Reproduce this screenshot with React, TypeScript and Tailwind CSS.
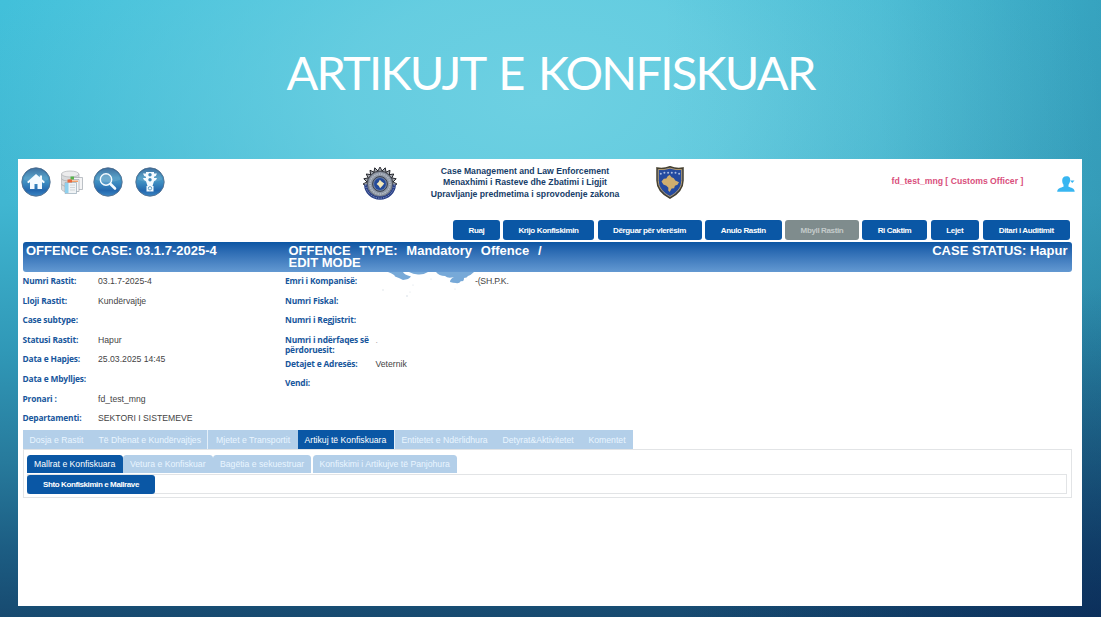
import type { ReactNode } from "react";

const actions = [
  { label: "Ruaj", cls: "ml-0 w-[47px] bg-[#0a57a5] text-white" },
  { label: "Krijo Konfiskimin", cls: "ml-[3px] w-[91px] bg-[#0a57a5] text-white" },
  { label: "Dërguar për vlerësim", cls: "ml-[3.5px] w-[104px] bg-[#0a57a5] text-white" },
  { label: "Anulo Rastin", cls: "ml-[3.5px] w-[76.5px] bg-[#0a57a5] text-white" },
  { label: "Mbyll Rastin", cls: "ml-[3.5px] w-[74px] bg-[#7f8c8d] text-[#c3caca]" },
  { label: "Ri Caktim", cls: "ml-[3px] w-[65px] bg-[#0a57a5] text-white" },
  { label: "Lejet", cls: "ml-[3.5px] w-[48.5px] bg-[#0a57a5] text-white" },
  { label: "Ditari i Auditimit", cls: "ml-[3.5px] w-[87.5px] bg-[#0a57a5] text-white" },
];

const leftFields = [
  ["Numri Rastit:", "03.1.7-2025-4"],
  ["Lloji Rastit:", "Kundërvajtje"],
  ["Case subtype:", ""],
  ["Statusi Rastit:", "Hapur"],
  ["Data e Hapjes:", "25.03.2025 14:45"],
  ["Data e Mbylljes:", ""],
  ["Pronari :", "fd_test_mng"],
  ["Departamenti:", "SEKTORI I SISTEMEVE"],
];

const tabs = [
  { label: "Dosja e Rastit", cls: "w-[69px] bg-[#b3cfe9] text-[#e9f5ff]" },
  { label: "Të Dhënat e Kundërvajtjes", cls: "w-[116.5px] border-r border-[#e4eff9] bg-[#b3cfe9] text-[#e9f5ff]" },
  { label: "Mjetet e Transportit", cls: "w-[89.5px] bg-[#b3cfe9] pl-[8px] text-[#e9f5ff]" },
  { label: "Artikuj të Konfiskuara", cls: "w-[96px] bg-[#0a57a5] text-white" },
  { label: "Entitetet e Ndërlidhura", cls: "w-[102px] border-l border-[#e4eff9] bg-[#b3cfe9] text-[#e9f5ff]" },
  { label: "Detyrat&Aktivitetet", cls: "w-[86px] bg-[#b3cfe9] text-[#e9f5ff]" },
  { label: "Komentet", cls: "w-[51px] bg-[#b3cfe9] text-[#e9f5ff]" },
];

const subTabs = [
  { label: "Mallrat e Konfiskuara", cls: "w-[96px] bg-[#0a57a5] text-white" },
  { label: "Vetura e Konfiskuar", cls: "w-[90px] bg-[#b3cfe9] text-[#e9f5ff]" },
  { label: "Bagëtia e sekuestruar", cls: "w-[98px] bg-[#b3cfe9] text-[#e9f5ff]" },
  { label: "Konfiskimi i Artikujve të Panjohura", cls: "ml-[1.5px] w-[144.5px] bg-[#b3cfe9] text-[#e9f5ff]" },
];

function Orb({ id, children }: { id: string; children: ReactNode }) {
  return (
    <svg viewBox="0 0 30 30" className="size-[30px] shrink-0">
      <defs>
        <linearGradient id={id} x1="0" y1="0" x2="0" y2="1">
          <stop offset="0" stopColor="#235c92" />
          <stop offset="0.35" stopColor="#4293c0" />
          <stop offset="0.5" stopColor="#3f8fc2" />
          <stop offset="0.8" stopColor="#2468ae" />
          <stop offset="1" stopColor="#3b86c4" />
        </linearGradient>
      </defs>
      <circle cx="15" cy="15" r="14.2" fill={`url(#${id})`} stroke="#55708f" strokeWidth="0.9" />
      <path d="M3 13a12 11.5 0 0 1 24 0q-12 4-24 0z" fill="#fff" opacity="0.12" />
      {children}
    </svg>
  );
}

function DatabaseIcon() {
  return (
    <svg viewBox="0 0 24 24" className="size-6 shrink-0">
      <path d="M1.500 4v15c0 2 3.500 3 8.500 3s9-1 9-3V4z" fill="#d9dbdd" stroke="#b0b3b6" strokeWidth="0.7" />
      <path d="M1.500 8.500c0 3.500 17.500 3.500 17.500 0M1.500 14c0 3.500 17.500 3.500 17.500 0" fill="none" stroke="#aaadb0" strokeWidth="0.8" />
      <ellipse cx="10.200" cy="4" rx="8.700" ry="3" fill="#ececed" stroke="#b0b3b6" strokeWidth="0.7" />
      <g strokeWidth="0.7">
        <path d="M13 7.500h9.500v12H13z" fill="#f4f4f5" stroke="#a0a8af" />
        <path d="M9 9.500h10v12H9z" fill="#f7f7f7" stroke="#a0a8af" />
        <path d="M5 12.500h11.500v11H5z" fill="#f0f3f5" stroke="#96aab8" />
      </g>
      <path d="M10.500 6.500h3.500v3h-3.500z" fill="#57b34a" />
      <path d="M7.500 9.500h4.500v3H7.500z" fill="#e9683d" />
      <path d="M12 10.500h6v1.500h-6z" fill="#efa06b" />
      <path d="M5 13h3.500v10H5z" fill="#8fd0ed" />
      <path d="M10 15h5M10 17.500h5M10 20h5" stroke="#c9cdd0" strokeWidth="0.8" />
    </svg>
  );
}

function CustomsBadge() {
  const teeth = Array.from({ length: 11 }, (_, i) => -90 + i * 18);
  return (
    <svg viewBox="0 0 34 34" className="h-[34px] w-[34px]">
      {teeth.map((a) => (
        <path key={a} d="M14.700 5.300L17 1l2.300 4.300z" fill="#a5a9b0" stroke="#22242a" strokeWidth="0.900" transform={`rotate(${a} 17 18)`} />
      ))}
      <circle cx="17" cy="18" r="12.600" fill="#8f98a6" stroke="#4a4e58" strokeWidth="0.800" />
      <circle cx="17" cy="18" r="10" fill="none" stroke="#b9bfc8" strokeWidth="1.500" strokeDasharray="1.300 1.100" />
      <path d="M2.700 18.500a14.300 13.700 0 0 0 28.600 0" fill="none" stroke="#263d85" strokeWidth="3.200" />
      <path d="M2.700 18.500a14.300 13.700 0 0 0 28.600 0" fill="none" stroke="#b9c3dc" strokeWidth="0.800" strokeDasharray="1.200 1.300" />
      <circle cx="17" cy="18" r="7.400" fill="#6c7fa3" stroke="#33373f" strokeWidth="0.900" />
      <circle cx="17" cy="18" r="5.900" fill="#244a9a" />
      <path d="M16.800 13.800l1.700 1.700 2.700 2-1.700 2.200-2.400 2.600-1.200-2.300-2.300-1.900 2.100-2z" fill="#f3e8ba" />
    </svg>
  );
}

function KosovoCrest() {
  return (
    <svg viewBox="0 0 28 33" className="h-[33px] w-7">
      <path d="M1 2Q7.500 3.200 14 .8 20.500 3.200 27 2v12.500c0 8.500-6 14-13 17.700C7 28.500 1 23 1 14.500z" fill="#244aa0" stroke="#46402f" strokeWidth="1.500" />
      <path d="M2.300 3.500Q8 4.300 14 2.200q6 2.100 11.700 1.300v11c0 7.500-5.200 12.500-11.700 16C7.500 27 2.300 22 2.300 14.500z" fill="none" stroke="#c5a568" strokeWidth="0.900" />
      <path d="M13.800 9l1.700 2.200 2.300 1 1.500 2.200 3.700 1.800-1.500 2.500-2.600 1-.8 2.500-2.500.3-1.900 3.600-1.500-1.600.2-2.700-2-2-3-1.400-1.900-2.900 2.300-2.700 2.500-.2 1.600-2.700z" fill="#d0ae6e" />
      {[4.800, 8.400, 12.100, 15.800, 19.500, 23.100].map((x, i) => (
        <circle key={x} cx={x} cy={i === 0 || i === 5 ? 7.700 : 6.700} r="1" fill="#a9bbe2" />
      ))}
    </svg>
  );
}

function Smudge() {
  return (
    <svg viewBox="0 0 110 34" className="absolute left-[358px] top-[113px] h-[34px] w-[110px]">
      <defs>
        <filter id="soft"><feGaussianBlur stdDeviation="0.6" /></filter>
      </defs>
      <g filter="url(#soft)" fill="#77a9d8">
        <path d="M12 0h15q1 2.500 8 4.500-2 3-8 3.500-3-2-8-3.500 0-2-7-4.500z" />
        <path d="M33 0h19q-5 3-10 2.500Q37 2 33 0z" />
        <path d="M60 0h38q-3 3-6 4-1 2-4 2 0 4-3 3-2 3-5 2-3 0-6-1 0-3 4-5-6 2-9-1-6 0-9-4z" />
      </g>
      <g fill="#c9d2dc" opacity="0.8">
        <circle cx="7" cy="18" r="0.7" />
        <circle cx="31" cy="24" r="0.8" />
        <circle cx="37" cy="13" r="0.6" />
        <circle cx="34" cy="20" r="0.5" />
        <circle cx="55" cy="7" r="0.6" />
        <circle cx="79" cy="17" r="0.5" />
      </g>
    </svg>
  );
}

const labelCls = "font-['Open_Sans',sans-serif] font-bold text-[8.4px] tracking-[-0.18px] text-[#17569c]";

export default function App() {
  return (
    <div className="flex h-[617px] w-[1101px] flex-col overflow-hidden bg-[radial-gradient(ellipse_420px_330px_at_1101px_617px,#06205099_0%,#06205000_100%),linear-gradient(to_right,transparent_60%,#0e466612_80%,#0e3c6038_100%),radial-gradient(ellipse_560px_330px_at_540px_100px,#6dd0e2_0%,#6dd0e2d0_35%,#6dd0e200_100%),linear-gradient(to_bottom,#42c0da_0%,#40b6d1_33%,#3098b7_57%,#277a9c_75%,#1c5d83_89%,#174a70_100%)] font-['Liberation_Sans',Arial,sans-serif]">
      <h1 className="flex h-[159px] shrink-0 items-start justify-center pt-[43px] font-['Lato',sans-serif] text-[47px] leading-[58px] font-normal tracking-[-1.750px] [word-spacing:4px] whitespace-nowrap text-white">
        ARTIKUJT E KONFISKUAR
      </h1>
      <main className="relative ml-[18px] flex h-[447px] w-[1064px] flex-col bg-white pl-[4.5px] text-[8.67px] whitespace-nowrap">
        <header className="flex h-[61px] items-start">
          <nav className="-ml-[2px] flex items-start pt-[7.500px]">
            <Orb id="home">
              <path d="M15 7L6 15l1.500 1.300L9 15v7h4.500v-5h3v5H21v-7l1.500 1.300L24 15l-3-2.700V8.500h-2.200v1.800z" fill="#f5fbff" />
            </Orb>
            <div className="ml-[9px] pt-[3.500px]"><DatabaseIcon /></div>
            <div className="ml-[9px]">
              <Orb id="search">
                <circle cx="13" cy="12.500" r="5.700" fill="#ffffff22" stroke="#f5fbff" strokeWidth="1.400" />
                <path d="M17.500 17l4.500 4.500" stroke="#f5fbff" strokeWidth="2.600" strokeLinecap="round" />
              </Orb>
            </div>
            <div className="ml-[12px]">
              <Orb id="signal">
                <path d="M11 5h8v1.500h3q-.5 2.500-3 3.300V11h3q-.5 2.500-3 3.300L17.500 19h1v5.500h-7V19h1L11 14.300Q8.500 13.500 8 11h3V9.800Q8.500 9 8 6.500h3z" fill="#f5fbff" />
                <circle cx="15" cy="7.800" r="1.700" fill="#4389b8" />
                <circle cx="15" cy="12.800" r="1.700" fill="#4389b8" />
                <circle cx="15" cy="21.300" r="1.700" fill="none" stroke="#4389b8" strokeWidth="0.800" />
              </Orb>
            </div>
          </nav>
          <div className="ml-[198px] pt-[7px]"><CustomsBadge /></div>
          <div className="ml-[34px] w-[189px] pt-[6.500px] text-center leading-[11.600px] font-bold text-[#163d68]">
            <p>Case Management and Law Enforcement</p>
            <p>Menaxhimi i Rasteve dhe Zbatimi i Ligjit</p>
            <p>Upravljanje predmetima i sprovodenje zakona</p>
          </div>
          <div className="ml-9 pt-[7px]"><KosovoCrest /></div>
          <p className="ml-[208px] pt-4 leading-3 font-bold text-[#d94f7c]">fd_test_mng [ Customs Officer ]</p>
          <svg viewBox="0 0 18 16" className="mt-[16.500px] ml-[34px] h-4 w-[18px]">
            <path d="M9.500.3c3 0 4 2 3.600 4.700-.3 2-1.200 3-1.600 3.800v2c2.500.8 6 1.500 6.200 5H.2c.3-3.500 3.700-4.200 6.300-5v-2C5.500 7.500 5.200 6 5.200 4.500 5.200 2 6.500.3 9.500.3z" fill="#38b6f1" />
            <path d="M13 4.500h4.500l-2.200 2.500z" fill="#38b6f1" />
          </svg>
        </header>

        <div className="ml-[430.500px] flex h-5 text-[8px] font-bold tracking-[-0.360px]">
          {actions.map((a) => (
            <button key={a.label} className={`h-5 shrink-0 rounded-[3px] text-center leading-[21px] ${a.cls}`}>{a.label}</button>
          ))}
        </div>

        <section className="mt-[2px] flex h-[30px] w-[1049px] rounded-[3px] bg-linear-to-b from-[#0a56a4] to-[#6399d2] text-[13px] leading-[12px] font-bold text-white">
          <p className="w-[266px] pt-[3px] pl-[3.500px]">OFFENCE CASE: 03.1.7-2025-4</p>
          <div className="w-[253px] pt-[3px]">
            <p className="flex justify-between"><span>OFFENCE</span><span>TYPE:</span><span>Mandatory</span><span>Offence</span><span>/</span></p>
            <p>EDIT MODE</p>
          </div>
          <p className="flex-1 pt-[3px] pr-[4px] text-right">CASE STATUS: Hapur</p>
        </section>

        <section className="flex h-[157.500px] text-[#444]">
          <dl className="w-[262.500px]">
            {leftFields.map(([label, value]) => (
              <div key={label} className="flex h-[19.600px]">
                <dt className={`w-[75.500px] leading-[18px] ${labelCls}`}>{label}</dt>
                <dd className="leading-[19.500px]">{value}</dd>
              </div>
            ))}
          </dl>
          <dl>
            <div className="flex h-[19.600px]">
              <dt className={`w-[190px] leading-[18px] ${labelCls}`}>Emri i Kompanisë:</dt>
              <dd className="leading-[19.500px] tracking-[-0.200px]">-(SH.P.K.</dd>
            </div>
            <div className={`h-[19.600px] leading-[18px] ${labelCls}`}>Numri Fiskal:</div>
            <div className={`h-[19.600px] leading-[18px] ${labelCls}`}>Numri i Regjistrit:</div>
            <div className="flex h-[24px]">
              <dt className={`w-[90.500px] pt-[4px] leading-[10px] ${labelCls}`}>Numri i ndërfaqes së<br />përdoruesit:</dt>
              <dd className="leading-[19.500px] text-[#aaa]">.</dd>
            </div>
            <div className="flex h-[19.600px]">
              <dt className={`w-[90.500px] leading-[18px] ${labelCls}`}>Detajet e Adresës:</dt>
              <dd className="leading-[19.500px]">Veternik</dd>
            </div>
            <div className={`h-[19.600px] leading-[18px] ${labelCls}`}>Vendi:</div>
          </dl>
        </section>

        <div className="flex h-[19.500px]">
          {tabs.map((t) => (
            <button key={t.label} className={`h-[19px] shrink-0 pl-[7px] text-left leading-[20px] ${t.cls}`}>{t.label}</button>
          ))}
        </div>
        <section className="h-[49px] w-[1049.500px] border border-[#e2e4e6] pt-[5px] pl-[3.500px]">
          <div className="flex h-[18.500px]">
            {subTabs.map((t) => (
              <button key={t.label} className={`h-[18px] shrink-0 rounded-t-[3.500px] pl-[7px] text-left leading-[18.500px] ${t.cls}`}>{t.label}</button>
            ))}
          </div>
          <div className="h-[20px] w-[1039.500px] border border-[#e2e4e6]">
            <button className="-ml-px block h-[19px] w-32 rounded-[3px] bg-[#0a57a5] text-center text-[8px] leading-[19px] font-bold tracking-[-0.400px] text-white">Shto Konfiskimin e Mallrave</button>
          </div>
        </section>
        <Smudge />
      </main>
    </div>
  );
}
